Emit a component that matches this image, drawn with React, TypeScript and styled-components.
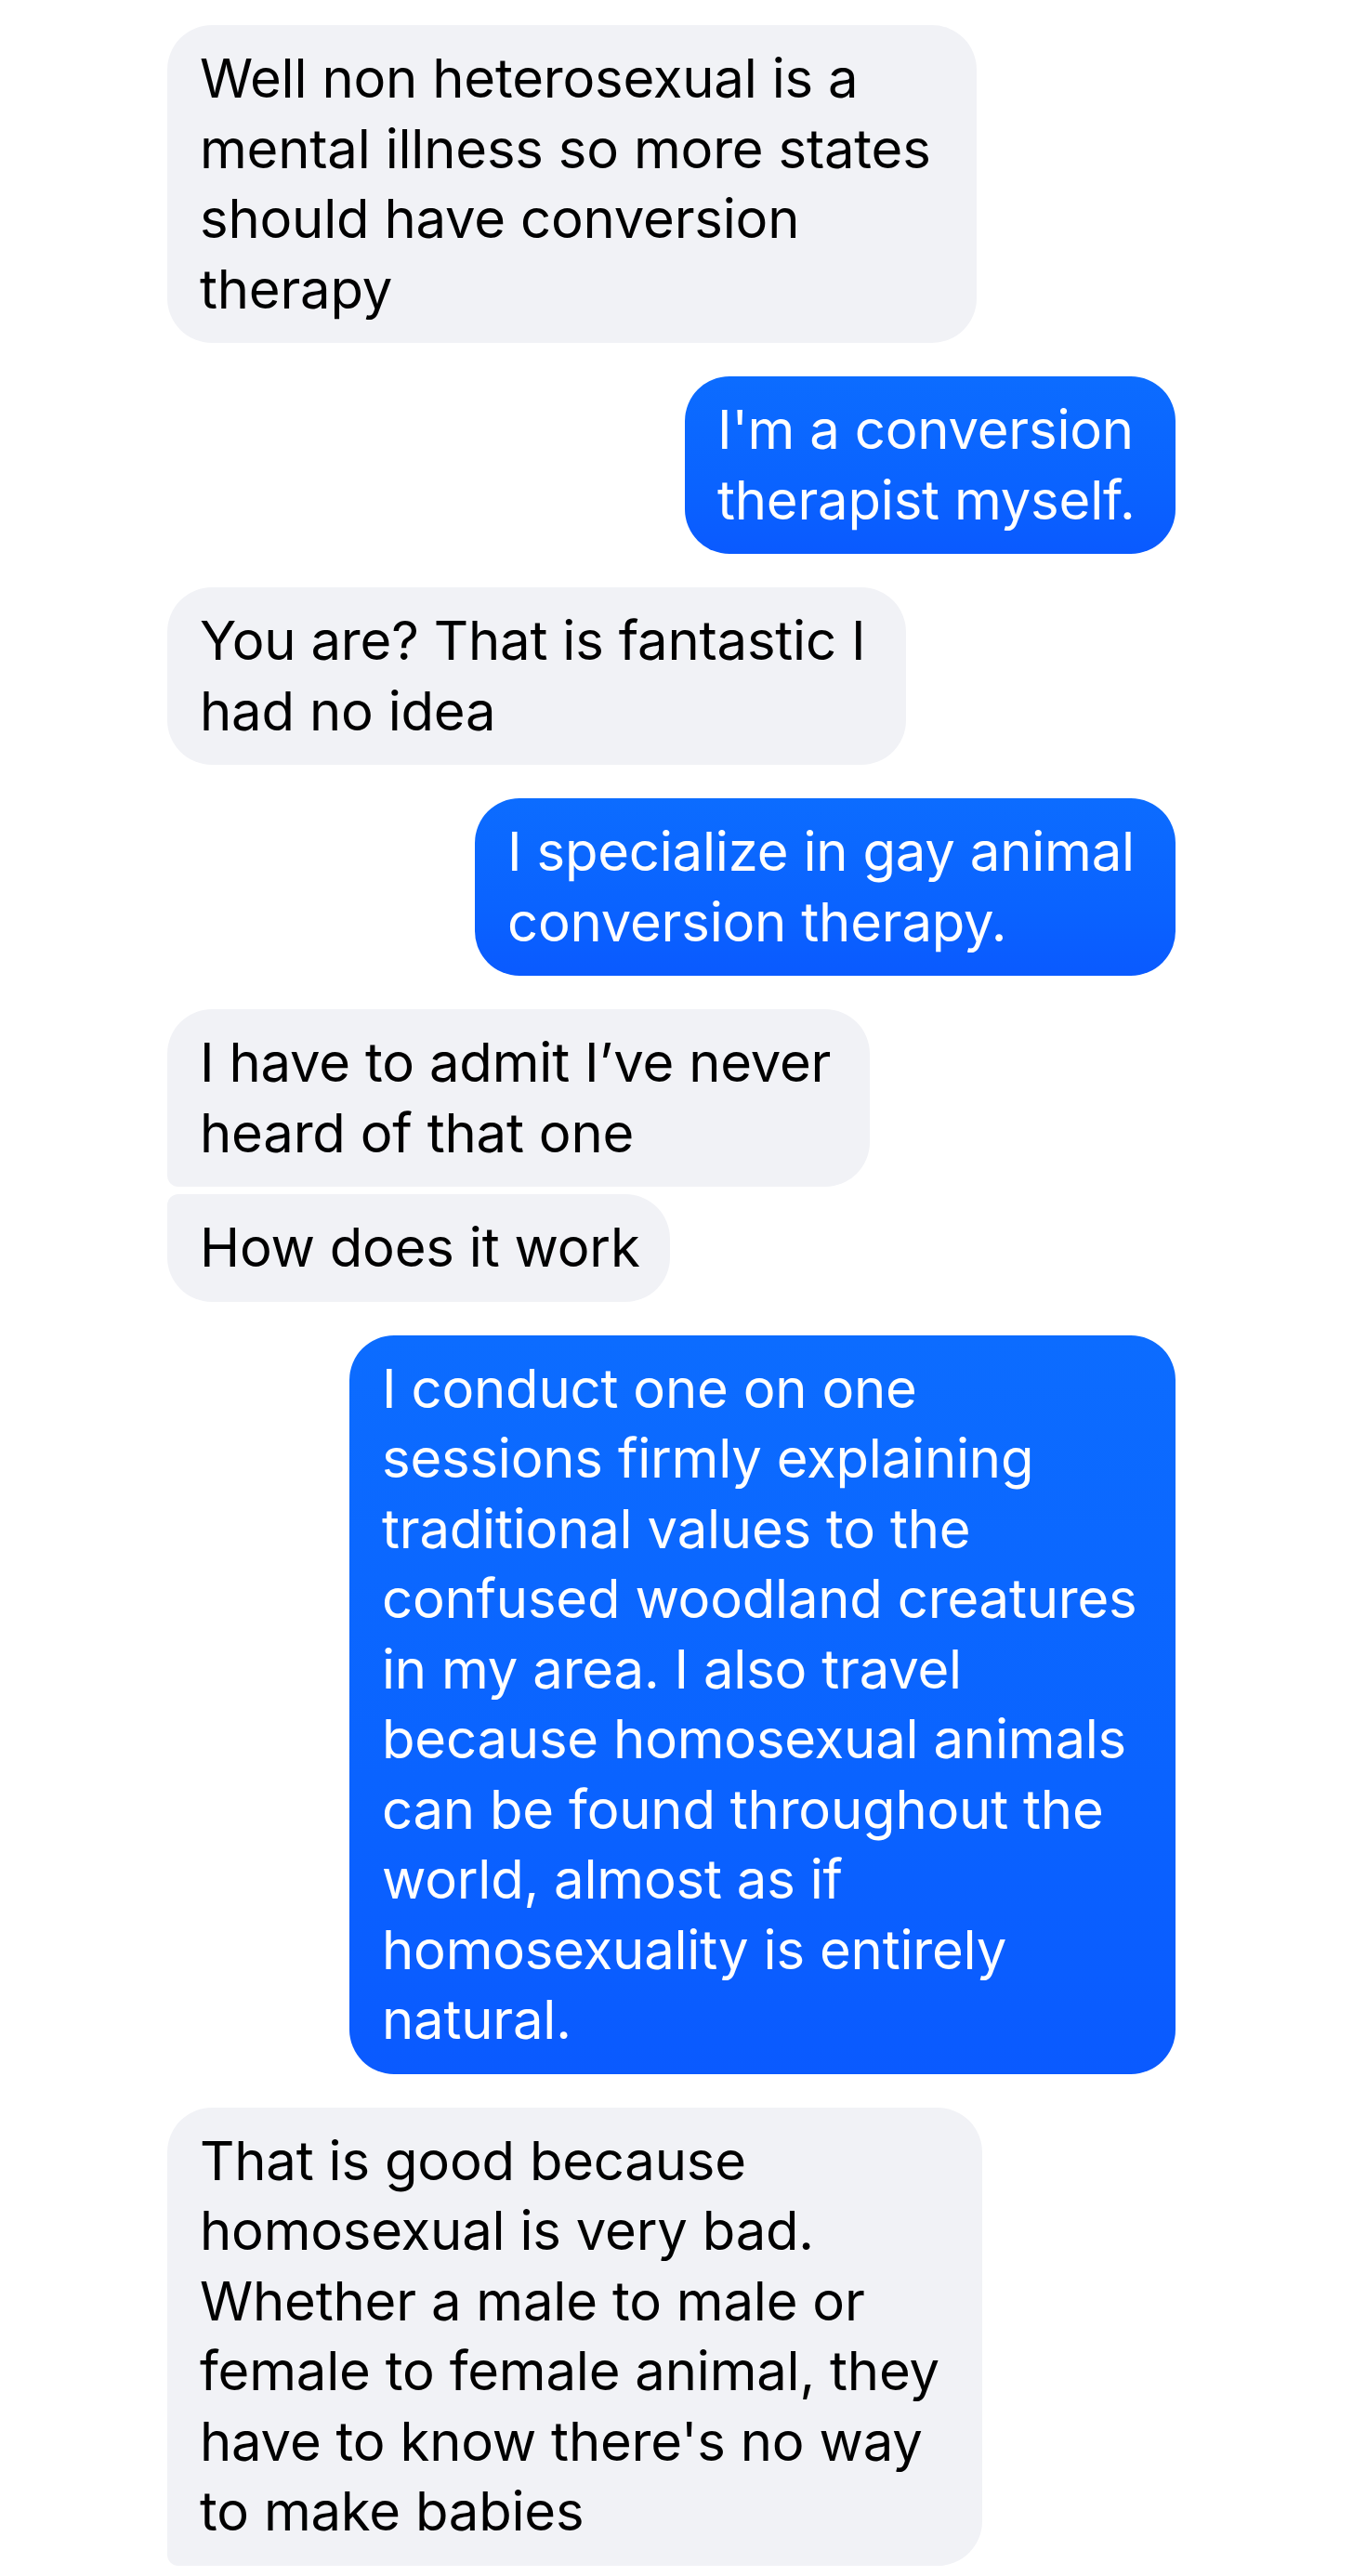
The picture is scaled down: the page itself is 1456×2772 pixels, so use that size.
import * as React from "react";
import styled, { createGlobalStyle, css } from "styled-components";

const GlobalStyle = createGlobalStyle`
    html, body {
        margin: 0;
        padding: 0;
        background: #fff;
    }
    body {
        font-family: "Inter", "Noto Sans", "Liberation Sans", sans-serif;
        -webkit-font-smoothing: antialiased;
    }
`;

const Thread = styled.div`
    display: flex;
    flex-direction: column;
    padding: 27px 191px 0 180px;
`;

const Row = styled.div<{ $mine: boolean; $grouped: boolean }>`
    display: flex;
    justify-content: ${props => props.$mine ? "flex-end" : "flex-start"};
    margin-top: ${props => props.$grouped ? "8px" : "36px"};
    &:first-child {
        margin-top: 0;
    }
`;

const Bubble = styled.div<{ $mine: boolean; $width: number; $tail: "none" | "top" | "bottom" }>`
    box-sizing: border-box;
    width: ${props => props.$width}px;
    padding: 20px 30px 20px 35px;
    border-radius: 48px;
    font-size: 58px;
    line-height: 75.5px;
    letter-spacing: -0.2px;
    white-space: nowrap;
    color: ${props => props.$mine ? "#fff" : "#000"};
    background: ${props => props.$mine
        ? "linear-gradient(180deg, #0c6cff 0%, #0a63ff 60%, #0a5aff 100%)"
        : "#f1f2f6"};
    ${props => props.$tail === "bottom" && css`
        border-bottom-left-radius: 12px;
    `}
    ${props => props.$tail === "top" && css`
        border-top-left-radius: 12px;
    `}
`;

type Msg = {
    mine: boolean;
    width: number;
    grouped?: boolean;
    tail?: "none" | "top" | "bottom";
    lines: string[];
};

const messages: Msg[] = [
    {
        mine: false,
        width: 871,
        lines: [
            "Well non heterosexual is a",
            "mental illness so more states",
            "should have conversion",
            "therapy",
        ],
    },
    { mine: true, width: 528, lines: ["I'm a conversion", "therapist myself."] },
    { mine: false, width: 795, lines: ["You are? That is fantastic I", "had no idea"] },
    { mine: true, width: 754, lines: ["I specialize in gay animal", "conversion therapy."] },
    {
        mine: false,
        width: 756,
        tail: "bottom",
        lines: ["I have to admit I\u2019ve never", "heard of that one"],
    },
    { mine: false, width: 541, grouped: true, tail: "top", lines: ["How does it work"] },
    {
        mine: true,
        width: 889,
        lines: [
            "I conduct one on one",
            "sessions firmly explaining",
            "traditional values to the",
            "confused woodland creatures",
            "in my area. I also travel",
            "because homosexual animals",
            "can be found throughout the",
            "world, almost as if",
            "homosexuality is entirely",
            "natural.",
        ],
    },
    {
        mine: false,
        width: 877,
        tail: "bottom",
        lines: [
            "That is good because",
            "homosexual is very bad.",
            "Whether a male to male or",
            "female to female animal, they",
            "have to know there's no way",
            "to make babies",
        ],
    },
];

const App = () => {
    return (
        <>
            <GlobalStyle />
            <Thread>
                {messages.map((m, i) => (
                    <Row key={i} $mine={m.mine} $grouped={!!m.grouped}>
                        <Bubble $mine={m.mine} $width={m.width} $tail={m.tail ?? "none"}>
                            {m.lines.map((l, j) => (
                                <React.Fragment key={j}>
                                    {l}
                                    {j < m.lines.length - 1 && <br />}
                                </React.Fragment>
                            ))}
                        </Bubble>
                    </Row>
                ))}
            </Thread>
        </>
    );
};

export default App;
